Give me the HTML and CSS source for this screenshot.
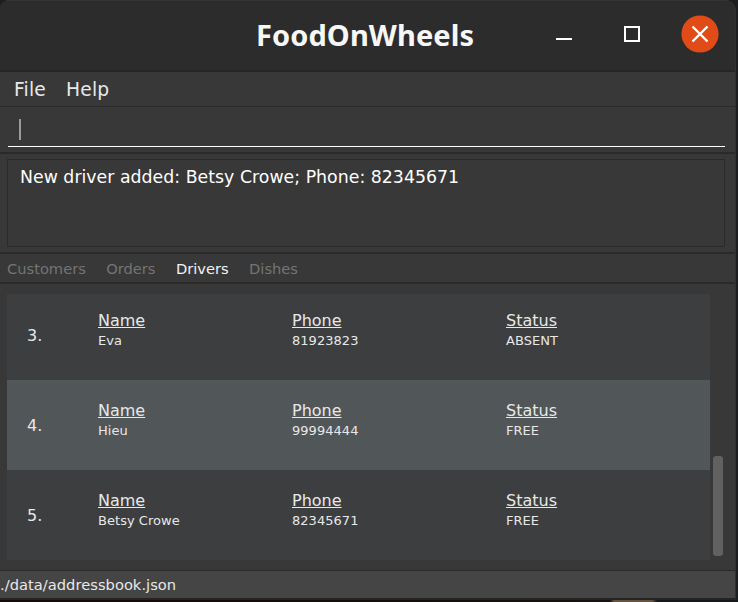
FILE: index.html
```html
<!DOCTYPE html>
<html lang="en">
<head>
<meta charset="utf-8">
<title>FoodOnWheels</title>
<link rel="stylesheet" href="styles.css">
</head>
<body>
<div class="window">
  <header class="titlebar">
    <h1 class="title"><svg class="title-fit" width="230" height="44"><text x="6" y="33" textLength="218" lengthAdjust="spacing">FoodOnWheels</text></svg></h1>
    <div class="controls">
      <svg width="18" height="18" viewBox="0 0 18 18"><path d="M1 14h16" stroke="#fff" stroke-width="2"/></svg>
      <svg width="18" height="18" viewBox="0 0 18 18"><rect x="2" y="2" width="14" height="14" fill="none" stroke="#fff" stroke-width="2"/></svg>
      <svg width="38" height="38" viewBox="0 0 38 38"><circle cx="19" cy="19" r="18.6" fill="#e04b17"/><path d="M11.5 11.5l15 15M26.5 11.5L11.5 26.5" stroke="#fff" stroke-width="2.4"/></svg>
    </div>
  </header>
  <nav class="menu"><span>File</span><span>Help</span></nav>
  <div class="command"><div class="field"><i class="caret"></i></div></div>
  <div class="result"><div class="message">New driver added: Betsy Crowe; Phone: 82345671</div></div>
  <nav class="tabs"><span>Customers</span><span>Orders</span><span class="active">Drivers</span><span>Dishes</span></nav>
  <main class="list-pane">
    <div class="list">
      <div class="row first">
        <div class="index">3.</div>
        <div class="cell"><u>Name</u><p>Eva</p></div>
        <div class="cell"><u>Phone</u><p>81923823</p></div>
        <div class="cell"><u>Status</u><p>ABSENT</p></div>
      </div>
      <div class="row alt">
        <div class="index">4.</div>
        <div class="cell"><u>Name</u><p>Hieu</p></div>
        <div class="cell"><u>Phone</u><p>99994444</p></div>
        <div class="cell"><u>Status</u><p>FREE</p></div>
      </div>
      <div class="row">
        <div class="index">5.</div>
        <div class="cell"><u>Name</u><p>Betsy Crowe</p></div>
        <div class="cell"><u>Phone</u><p>82345671</p></div>
        <div class="cell"><u>Status</u><p>FREE</p></div>
      </div>
    </div>
    <div class="scroll"><div class="thumb"></div></div>
  </main>
  <footer class="status">./data/addressbook.json</footer>
</div>
<div class="desktop"></div>
</body>
</html>
```

FILE: styles.css
```css
* { box-sizing: border-box; }
body {
  margin: 0;
  width: 738px;
  height: 602px;
  overflow: hidden;
  background: #1d1e1f;
  font-family: "DejaVu Sans", sans-serif;
  color: #e8e8e8;
}
.window {
  width: 736px;
  height: 600px;
  background: #383838;
  border-right: 1px solid #303030;
  border-bottom: 2px solid #242424;
  border-radius: 9px 11px 0 0;
  overflow: hidden;
  display: flex;
  flex-direction: column;
}
.titlebar {
  height: 72px;
  flex: none;
  background: #2c2c2c;
  border-bottom: 2px solid #262626;
  display: flex;
  align-items: center;
  padding-left: 250px;
  box-shadow: inset 0 1px #343434;
}
.title {
  margin: 0;
  width: 230px;
  height: 44px;
  font: bold 29px/44px "Noto Sans", sans-serif;
}
.title-fit { display: block; fill: #f7f7f7; }
.controls {
  display: flex;
  align-items: center;
  margin: -2px 0 0 75px;
}
.controls svg { display: block; flex: none; }
.controls svg:nth-child(2) { margin-left: 50px; }
.controls svg:nth-child(3) { margin-left: 40px; }
.menu {
  height: 35px;
  flex: none;
  border-bottom: 1px solid #2a2a2a;
  display: flex;
  gap: 20px;
  padding-left: 14px;
  font-size: 18.67px;
  letter-spacing: 0.2px;
  line-height: 36px;
}
.command {
  height: 47px;
  flex: none;
  border-bottom: 2px solid #2a2a2a;
  padding: 0 10px 0 8px;
}
.field {
  height: 40px;
  border-bottom: 1px solid #fff;
  padding: 12px 0 0 11px;
}
.caret { display: block; width: 2px; height: 21px; background: #9b9b9b; }
.result {
  height: 100px;
  flex: none;
  border-bottom: 2px solid #2a2a2a;
  padding: 5px 10px 5px 7px;
}
.message {
  height: 88px;
  border: 1px solid #2a2a2a;
  padding: 7px 12px;
  font-size: 17.33px;
  letter-spacing: 0.015px;
  line-height: 20px;
  color: #fff;
}
.tabs {
  height: 30px;
  flex: none;
  border-bottom: 2px solid #2a2a2a;
  display: flex;
  gap: 20.4px;
  padding-left: 7px;
  font-size: 14.67px;
  line-height: 29px;
  color: #747474;
}
.tabs .active { color: #f2f2f2; }
.list-pane {
  height: 286px;
  flex: none;
  display: flex;
  padding: 10px 0 10px 7px;
}
.list { width: 703px; }
.row {
  height: 90px;
  background: #3c3e3f;
  display: grid;
  grid-template-columns: 71px 194px 214px 1fr;
  padding: 20px 0 0 20px;
}
.row.first { height: 86px; padding-top: 16px; }
.row.alt { background: #515658; }
.index { font-size: 16px; line-height: 20px; padding-top: 16px; }
.cell u { display: block; font-size: 16px; line-height: 21px; }
.cell p { margin: 0; font-size: 13px; letter-spacing: 0.04px; line-height: 19px; }
.scroll { padding: 162px 0 0 3px; }
.thumb { width: 10px; height: 100px; border-radius: 3px; background: #616161; }
.status {
  flex: 1;
  background: #454545;
  border-top: 1px solid #2a2a2a;
  font-size: 14.67px;
  letter-spacing: 0.03px;
  line-height: 28px;
}
.desktop {
  height: 2px;
  background: linear-gradient(90deg, #160b08 0 250px, #17120f 610px, #66543f 614px 652px, #15191b 657px 738px);
}
```
